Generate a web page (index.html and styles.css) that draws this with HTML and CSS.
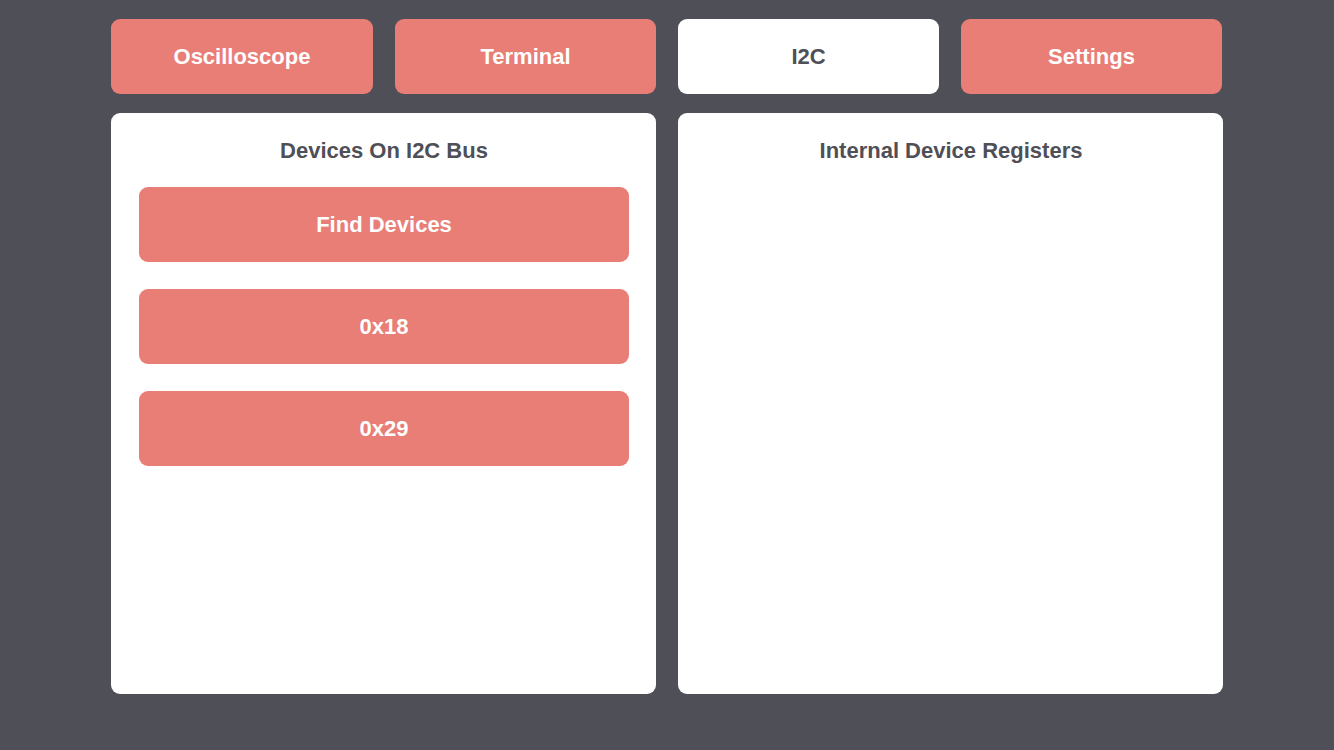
FILE: index.html
```html
<!DOCTYPE html>
<html>
<head>
<meta charset="utf-8">
<link rel="stylesheet" href="styles.css">
</head>
<body>
<div class="app">
  <nav class="tabs">
    <div class="tab">Oscilloscope</div>
    <div class="tab">Terminal</div>
    <div class="tab active">I2C</div>
    <div class="tab">Settings</div>
  </nav>
  <main class="panels">
    <section class="panel">
      <h2 class="panel-title">Devices On I2C Bus</h2>
      <div class="btn">Find Devices</div>
      <div class="btn">0x18</div>
      <div class="btn">0x29</div>
    </section>
    <section class="panel">
      <h2 class="panel-title">Internal Device Registers</h2>
    </section>
  </main>
</div>
</body>
</html>
```
FILE: styles.css
```css
html, body {
  margin: 0;
  padding: 0;
  background: #4f4f57;
  font-family: "Liberation Sans", Arial, sans-serif;
}
.app {
  width: 1112px;
  margin: 0 auto;
  padding-top: 19px;
}
.tabs {
  display: grid;
  grid-template-columns: 262px 261px 261px 261px;
  column-gap: 22px;
}
.tab {
  height: 75px;
  border-radius: 9px;
  background: #e87e76;
  color: #fff;
  font-weight: bold;
  font-size: 22px;
  display: flex;
  align-items: center;
  justify-content: center;
}
.tab.active {
  background: #fff;
  color: #4f4f57;
}
.panels {
  margin-top: 19px;
  display: grid;
  grid-template-columns: 1fr 1fr;
  column-gap: 22px;
}
.panel {
  background: #fff;
  border-radius: 9px;
  height: 581px;
  box-sizing: border-box;
  padding: 24px 27px 24px 28px;
  display: flex;
  flex-direction: column;
}
.panel-title {
  margin: 0 0 23px;
  font-size: 22px;
  line-height: 27px;
  font-weight: bold;
  color: #4f4f57;
  text-align: center;
}
.btn {
  height: 75px;
  border-radius: 9px;
  background: #e87e76;
  color: #fff;
  font-weight: bold;
  font-size: 22px;
  display: flex;
  align-items: center;
  justify-content: center;
  margin-bottom: 27px;
}
```
